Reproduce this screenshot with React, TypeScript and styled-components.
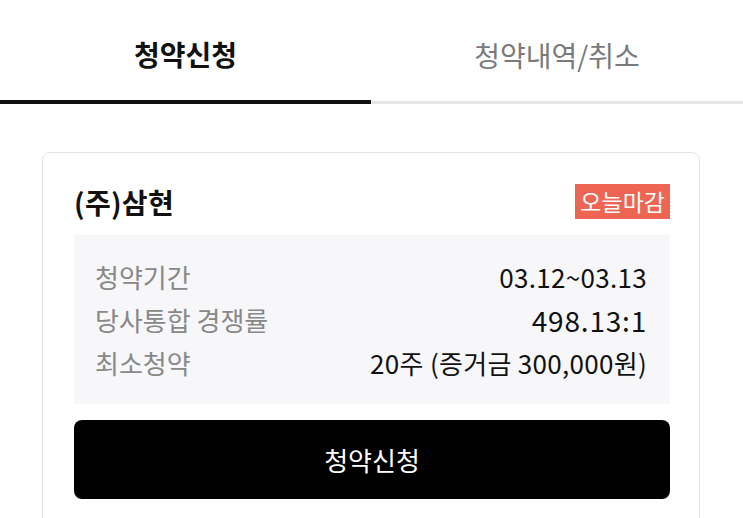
import React from "react";
import styled, { createGlobalStyle } from "styled-components";

const GlobalStyle = createGlobalStyle`
  body {
    margin: 0;
    background: #ffffff;
    font-family: "Noto Sans CJK KR", "Noto Sans", sans-serif;
    color: #111111;
  }
`;

type Row = { label: string; value: string; emphasis?: boolean };

const rows: Row[] = [
  { label: "청약기간", value: "03.12~03.13" },
  { label: "당사통합 경쟁률", value: "498.13:1", emphasis: true },
  { label: "최소청약", value: "20주 (증거금 300,000원)" },
];

const App: React.FC = () => {
  return (
    <>
      <GlobalStyle />
      <Page>
        <Tabs>
          <Tab active>청약신청</Tab>
          <Tab>청약내역/취소</Tab>
        </Tabs>
        <Card>
          <CardHeader>
            <Company>(주)삼현</Company>
            <Badge>오늘마감</Badge>
          </CardHeader>
          <InfoBox>
            {rows.map((r) => (
              <InfoRow key={r.label}>
                <Label>{r.label}</Label>
                <Value emphasis={r.emphasis}>{r.value}</Value>
              </InfoRow>
            ))}
          </InfoBox>
          <ApplyButton>청약신청</ApplyButton>
        </Card>
      </Page>
    </>
  );
};

const Page = styled.div`
  width: 743px;
  height: 518px;
  overflow: hidden;
`;

const Tabs = styled.div`
  display: grid;
  grid-template-columns: 371px 1fr;
  height: 104px;
`;

const Tab = styled.div<{ active?: boolean }>`
  display: flex;
  align-items: center;
  justify-content: center;
  padding-top: 8px;
  font-size: 28px;
  font-weight: ${(p) => (p.active ? 700 : 400)};
  color: ${(p) => (p.active ? "#111111" : "#7a7a7a")};
  border-bottom: ${(p) => (p.active ? "4px solid #111111" : "3px solid #e6e6e8")};
`;

const Card = styled.div`
  margin: 48px 43px 0 42px;
  border: 1px solid #e4e4e6;
  border-radius: 8px;
  padding: 31px 29px 40px 31px;
  display: flex;
  flex-direction: column;
  gap: 16px;
`;

const CardHeader = styled.div`
  display: flex;
  align-items: center;
  justify-content: space-between;
  height: 35px;
`;

const Company = styled.div`
  font-size: 28px;
  font-weight: 700;
  letter-spacing: 0.3px;
  color: #111111;
`;

const Badge = styled.div`
  background: #ef6553;
  color: #ffffff;
  font-size: 23px;
  height: 35px;
  line-height: 35px;
  padding: 0 5px;
`;

const InfoBox = styled.div`
  background: #f7f7f9;
  padding: 20px 23px 20px 21px;
  display: flex;
  flex-direction: column;
`;

const InfoRow = styled.div`
  display: flex;
  justify-content: space-between;
  align-items: center;
  height: 43px;
  font-size: 26px;
  line-height: 1;
`;

const Label = styled.span`
  color: #888888;
`;

const Value = styled.span<{ emphasis?: boolean }>`
  color: #111111;
  font-size: ${(p) => (p.emphasis ? "28px" : "26px")};
  letter-spacing: ${(p) => (p.emphasis ? "0.8px" : "0.3px")};
`;

const ApplyButton = styled.button`
  height: 79px;
  border: none;
  border-radius: 8px;
  background: #000000;
  color: #ffffff;
  font-family: inherit;
  font-size: 26px;
  cursor: pointer;
`;

export default App;
